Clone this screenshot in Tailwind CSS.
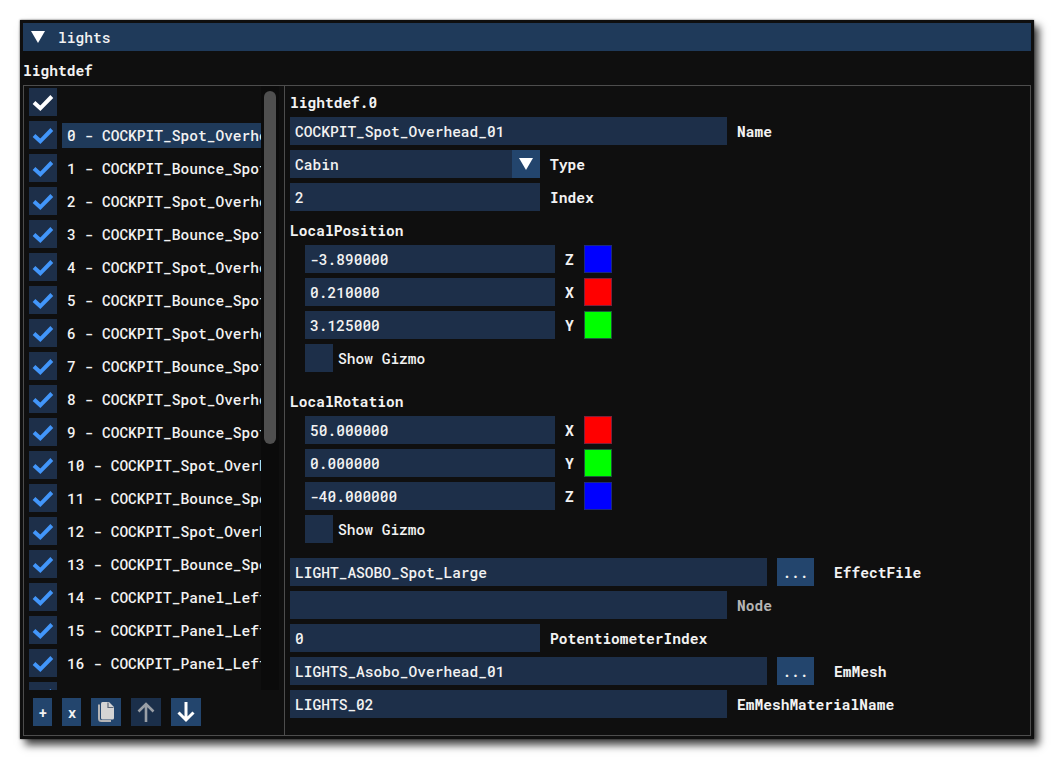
<!DOCTYPE html>
<html lang="en">
<head>
  <meta charset="UTF-8" />
  <meta name="viewport" content="width=device-width, initial-scale=1" />
  <title>lights</title>
  <script src="https://cdn.jsdelivr.net/npm/@tailwindcss/browser@4"></script>
</head>
<body class="bg-white p-5 h-[759px] overflow-hidden">
  <!-- Window -->
  <div class="w-[1014px] h-[719px] p-[3px] bg-[#0f0f0f] text-[#f2f2f2] font-['Roboto_Mono','DejaVu_Sans_Mono',monospace] font-medium text-[14.55px] leading-7 whitespace-nowrap shadow-[0_0_2px_rgba(0,0,0,0.6),5px_6px_8px_rgba(0,0,0,0.75)]">
    <!-- Header -->
    <div class="h-7 flex items-center bg-[#1f3a5a]">
      <svg class="ml-2 w-[14px] h-3" viewBox="0 0 14 12"><path d="M0 0H14L7 12Z" fill="#fff" /></svg>
      <span class="ml-[13px] pt-0.5">lights</span>
    </div>
    <div class="h-[34px] pt-[6px] font-bold">lightdef</div>

    <div class="w-[1008px] h-[651px] flex border border-[#4d4d4d]">
      <!-- Light list -->
      <div class="w-[261px] border-r border-[#4d4d4d]">
        <div class="h-[604px] w-[255px] flex overflow-hidden">
          <div id="lights" class="w-[237px] pl-[5px] pt-[2px] flex flex-col gap-[5px] overflow-hidden">
            <div class="w-7 h-7 shrink-0 bg-[#1d2f49]">
              <svg class="w-7 h-7" viewBox="0 0 28 28"><path d="M5 14.500L11.300 20.300L22.800 8.500" fill="none" stroke="#fff" stroke-width="4" /></svg>
            </div>
          </div>
          <div class="w-[18px] pl-[3px] pt-[5px] bg-[#0b0b0b]">
            <div class="w-3 h-[353px] rounded-full bg-[#4f4f4f]"></div>
          </div>
        </div>
        <div class="flex pl-[9px] pt-2 gap-[10px] text-center">
          <div class="w-[19px] h-7 pl-px bg-[#23456d] text-[14px] leading-[29px] font-bold">+</div>
          <div class="w-[19px] h-7 pl-px bg-[#23456d] text-[14px] leading-[29px] font-bold">x</div>
          <div class="w-[30px] h-7 bg-[#23456d]">
            <svg class="w-[30px] h-7" viewBox="0 0 30 28">
              <path d="M8 6.500V20.500Q8 23 10.500 23H20" fill="none" stroke="#b4b4b6" stroke-width="2" />
              <path d="M11.500 4H18L23 9V20Q23 21.500 21.500 21.500H11.500Q10 21.500 10 20V5.500Q10 4 11.500 4Z" fill="#d4d4d4" />
              <path d="M17 4.500V9.500H22.500" fill="none" stroke="#5d6878" stroke-width="1.200" />
            </svg>
          </div>
          <div class="w-[30px] h-7 bg-[#1b2f4a]">
            <svg class="w-[30px] h-7" viewBox="0 0 30 28" fill="none" stroke="#9a9fa6" stroke-width="2.6"><path d="M15 24V6M7.500 13.500L15 6L22.500 13.500" /></svg>
          </div>
          <div class="w-[30px] h-7 bg-[#23456d]">
            <svg class="w-[30px] h-7" viewBox="0 0 30 28" fill="none" stroke="#fff" stroke-width="3"><path d="M15 4V22M7.500 14.500L15 22L22.500 14.500" /></svg>
          </div>
        </div>
      </div>

      <!-- Properties -->
      <div class="pl-[5px] pt-[3px]">
        <div class="h-7 font-bold leading-[27px]">lightdef.0</div>
        <div class="flex flex-col gap-[5px]">
          <div class="h-7 flex gap-[10px]">
            <div class="w-[437px] pl-[5px] pt-px bg-[#1d2f49]">COCKPIT_Spot_Overhead_01</div>
            <div class="pt-px font-bold">Name</div>
          </div>
          <div class="h-7 flex gap-[10px]">
            <div class="w-[250px] pl-[5px] flex justify-between bg-[#1d2f49]">
              <span class="pt-px">Cabin</span>
              <svg class="w-7 h-7 bg-[#23456d]" viewBox="0 0 28 28"><path d="M7 8H21L14 20Z" fill="#fff" /></svg>
            </div>
            <div class="pt-px font-bold">Type</div>
          </div>
          <div class="h-7 flex gap-[10px]">
            <div class="w-[250px] pl-[5px] pt-px bg-[#1d2f49]">2</div>
            <div class="pt-px font-bold">Index</div>
          </div>
        </div>

        <div class="h-[34px] pt-[6px] font-bold">LocalPosition</div>
        <div class="pl-[15px] flex flex-col gap-[5px]">
          <div class="h-7 flex gap-[10px]">
            <div class="w-[250px] pl-[5px] pt-px bg-[#1d2f49]">-3.890000</div>
            <div class="w-[9px] pt-px font-bold">Z</div>
            <div class="w-7 border border-[#1c2a80] bg-[#0000ff]"></div>
          </div>
          <div class="h-7 flex gap-[10px]">
            <div class="w-[250px] pl-[5px] pt-px bg-[#1d2f49]">0.210000</div>
            <div class="w-[9px] pt-px font-bold">X</div>
            <div class="w-7 border border-[#80203a] bg-[#ff0000]"></div>
          </div>
          <div class="h-7 flex gap-[10px]">
            <div class="w-[250px] pl-[5px] pt-px bg-[#1d2f49]">3.125000</div>
            <div class="w-[9px] pt-px font-bold">Y</div>
            <div class="w-7 border border-[#1d5a3a] bg-[#00ff00]"></div>
          </div>
          <div class="h-7 flex gap-[5px]">
            <div class="w-7 bg-[#1d2f49]"></div>
            <div class="pt-px">Show Gizmo</div>
          </div>
        </div>

        <div class="h-[44px] pt-4 font-bold">LocalRotation</div>
        <div class="pl-[15px] flex flex-col gap-[5px]">
          <div class="h-7 flex gap-[10px]">
            <div class="w-[250px] pl-[5px] pt-px bg-[#1d2f49]">50.000000</div>
            <div class="w-[9px] pt-px font-bold">X</div>
            <div class="w-7 border border-[#80203a] bg-[#ff0000]"></div>
          </div>
          <div class="h-7 flex gap-[10px]">
            <div class="w-[250px] pl-[5px] pt-px bg-[#1d2f49]">0.000000</div>
            <div class="w-[9px] pt-px font-bold">Y</div>
            <div class="w-7 border border-[#1d5a3a] bg-[#00ff00]"></div>
          </div>
          <div class="h-7 flex gap-[10px]">
            <div class="w-[250px] pl-[5px] pt-px bg-[#1d2f49]">-40.000000</div>
            <div class="w-[9px] pt-px font-bold">Z</div>
            <div class="w-7 border border-[#1c2a80] bg-[#0000ff]"></div>
          </div>
          <div class="h-7 flex gap-[5px]">
            <div class="w-7 bg-[#1d2f49]"></div>
            <div class="pt-px">Show Gizmo</div>
          </div>
        </div>

        <div class="mt-[15px] flex flex-col gap-[5px]">
          <div class="h-7 flex gap-[10px]">
            <div class="w-[477px] pl-[5px] pt-px bg-[#1d2f49]">LIGHT_ASOBO_Spot_Large</div>
            <div class="w-[37px] pt-px text-center bg-[#23456d]">...</div>
            <div class="pl-[10px] pt-px font-bold">EffectFile</div>
          </div>
          <div class="h-7 flex gap-[10px]">
            <div class="w-[437px] bg-[#1d2f49]"></div>
            <div class="pt-px font-bold text-[#b4b4b4]">Node</div>
          </div>
          <div class="h-7 flex gap-[10px]">
            <div class="w-[250px] pl-[5px] pt-px bg-[#1d2f49]">0</div>
            <div class="pt-px font-bold">PotentiometerIndex</div>
          </div>
          <div class="h-7 flex gap-[10px]">
            <div class="w-[477px] pl-[5px] pt-px bg-[#1d2f49]">LIGHTS_Asobo_Overhead_01</div>
            <div class="w-[37px] pt-px text-center bg-[#23456d]">...</div>
            <div class="pl-[10px] pt-px font-bold">EmMesh</div>
          </div>
          <div class="h-7 flex gap-[10px]">
            <div class="w-[437px] pl-[5px] pt-px bg-[#1d2f49]">LIGHTS_02</div>
            <div class="pt-px font-bold">EmMeshMaterialName</div>
          </div>
        </div>
      </div>
    </div>
  </div>

  <script>
    const names = [];
    for (let i = 0; i < 14; i++) {
      names.push(i % 2 ? "COCKPIT_Bounce_Spot" : "COCKPIT_Spot_Overhead");
    }
    names.push("COCKPIT_Panel_Left", "COCKPIT_Panel_Left", "COCKPIT_Panel_Left", "");

    const list = document.getElementById("lights");
    names.forEach((name, i) => {
      const selected = i === 0 ? "bg-[#1f3a5a]" : "";
      list.innerHTML += `
        <div class="h-7 shrink-0 flex gap-[5px]">
          <div class="w-7 h-7 shrink-0 bg-[#1d2f49]">
            <svg class="w-7 h-7" viewBox="0 0 28 28"><path d="M5 14.500L11.300 20.300L22.800 8.500" fill="none" stroke="#4296fa" stroke-width="4" /></svg>
          </div>
          <div class="w-[199px] h-[25px] mt-[2px] pl-[5px] leading-[26px] overflow-hidden ${selected}">${name ? `${i} - ${name}` : ""}</div>
        </div>`;
    });
  </script>
</body>
</html>
